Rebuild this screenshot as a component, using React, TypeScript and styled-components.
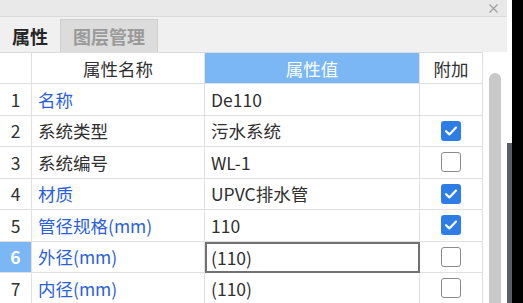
import React from 'react';
import styled, { createGlobalStyle } from 'styled-components';

const GlobalStyle = createGlobalStyle`
  html, body {
    margin: 0;
    padding: 0;
    background: #000;
  }
  body {
    font-family: "Noto Sans CJK SC", "Noto Sans", sans-serif;
  }
`;

const Page = styled.div`
  display: flex;
  width: 523px;
  height: 303px;
  overflow: hidden;
  background: #000;
`;

const Panel = styled.div`
  width: 507px;
  display: flex;
  flex-direction: column;
  background: #f0f0f0;
`;

const TitleBar = styled.div`
  height: 16px;
  background: #e9e9e9;
  border-bottom: 1px solid #dadada;
  display: flex;
  justify-content: flex-end;
  align-items: center;
  padding-right: 9px;
`;

const CloseIcon = styled.svg`
  width: 9px;
  height: 9px;
  stroke: #a0a0a0;
  stroke-width: 1.3;
`;

const TabBar = styled.div`
  height: 35px;
  display: flex;
  align-items: flex-end;
  background: #f0f0f0;
`;

const Tab = styled.div<{ $active?: boolean }>`
  height: 33px;
  box-sizing: border-box;
  padding: 0 ${p => (p.$active ? 11 : 12)}px;
  display: flex;
  align-items: center;
  font-size: 18px;
  font-weight: 700;
  color: ${p => (p.$active ? '#262626' : '#9a9a9a')};
  background: ${p => (p.$active ? '#f0f0f0' : '#dcdcdc')};
  border: 1px solid ${p => (p.$active ? 'transparent' : '#d0d0d0')};
  border-bottom: none;
`;

const Body = styled.div`
  flex: 1;
  display: flex;
  background: #fff;
  min-height: 0;
`;

const Grid = styled.div`
  width: 483px;
  display: grid;
  grid-template-columns: 32px 173px 215px 63px;
  grid-template-rows: 31px;
  grid-auto-rows: 31.5px;
  border-top: 1px solid #dcdcdc;
  align-content: start;
`;

const Cell = styled.div<{ $align?: 'left' | 'center'; $tone?: 'head' | 'sel' | 'plain' }>`
  box-sizing: border-box;
  border-right: 1px solid #e0e0e0;
  border-bottom: 1px solid #e0e0e0;
  display: flex;
  align-items: center;
  justify-content: ${p => (p.$align === 'center' ? 'center' : 'flex-start')};
  padding: 0 6px;
  font-size: 17.5px;
  color: #303030;
  white-space: nowrap;
  background: ${p => (p.$tone === 'head' || p.$tone === 'sel' ? '#7ab7f4' : '#fff')};
  ${p => (p.$tone === 'head' ? 'color: #fff;' : '')}
  ${p => (p.$tone === 'sel' ? 'color: #fff; font-weight: 700;' : '')}
`;

const NameText = styled.span<{ $blue?: boolean }>`
  color: ${p => (p.$blue ? '#2b5fdc' : '#303030')};
`;

const EditCell = styled(Cell)`
  border: 2px solid #717171;
  padding-left: 4px;
`;

const Check = styled.span<{ $on?: boolean }>`
  width: 20px;
  height: 20px;
  box-sizing: border-box;
  border-radius: 3px;
  display: flex;
  align-items: center;
  justify-content: center;
  background: ${p => (p.$on ? '#2e7de6' : '#fff')};
  border: ${p => (p.$on ? 'none' : '1.5px solid #8a8a8a')};
`;

const ScrollArea = styled.div`
  flex: 1;
  display: flex;
  padding-left: 6px;
  padding-top: 21px;
`;

const Thumb = styled.div`
  width: 12px;
  background: #c9c9c9;
  border-radius: 6px 6px 0 0;
`;

const EdgeStrip = styled.div`
  width: 5px;
  display: flex;
  flex-direction: column;
  background: #fff;
`;

const EdgeDark = styled.div`
  margin-top: 143px;
  flex: 1;
  background: #595e66;
`;

const Black = styled.div`
  flex: 1;
  background: #000;
`;

const rows = [
  { name: '名称', blue: true, value: 'De110', check: null },
  { name: '系统类型', blue: false, value: '污水系统', check: true },
  { name: '系统编号', blue: false, value: 'WL-1', check: false },
  { name: '材质', blue: true, value: 'UPVC排水管', check: true },
  { name: '管径规格(mm)', blue: true, value: '110', check: true },
  { name: '外径(mm)', blue: true, value: '(110)', check: false },
  { name: '内径(mm)', blue: true, value: '(110)', check: false },
];

const Tick = () => (
  <svg width="14" height="12" viewBox="0 0 14 12">
    <path d="M2 6.2 L5.4 9.4 L12 2.6" fill="none" stroke="#fff" strokeWidth="2.2" strokeLinecap="round" strokeLinejoin="round" />
  </svg>
);

export default function App() {
  const selected = 5;
  return (
    <Page>
      <GlobalStyle />
      <Panel>
        <TitleBar>
          <CloseIcon viewBox="0 0 9 9">
            <path d="M0.5 0.5 L8.5 8.5 M8.5 0.5 L0.5 8.5" />
          </CloseIcon>
        </TitleBar>
        <TabBar>
          <Tab $active>属性</Tab>
          <Tab>图层管理</Tab>
        </TabBar>
        <Body>
          <Grid>
            <Cell />
            <Cell $align="center">属性名称</Cell>
            <Cell $align="center" $tone="head">属性值</Cell>
            <Cell $align="center">附加</Cell>
            {rows.map((r, i) => (
              <React.Fragment key={r.name}>
                <Cell $align="center" $tone={i === selected ? 'sel' : 'plain'}>{i + 1}</Cell>
                <Cell>
                  <NameText $blue={r.blue}>{r.name}</NameText>
                </Cell>
                {i === selected ? <EditCell>{r.value}</EditCell> : <Cell>{r.value}</Cell>}
                <Cell $align="center">
                  {r.check !== null && <Check $on={r.check}>{r.check && <Tick />}</Check>}
                </Cell>
              </React.Fragment>
            ))}
          </Grid>
          <ScrollArea>
            <Thumb />
          </ScrollArea>
        </Body>
      </Panel>
      <EdgeStrip>
        <EdgeDark />
      </EdgeStrip>
      <Black />
    </Page>
  );
}
